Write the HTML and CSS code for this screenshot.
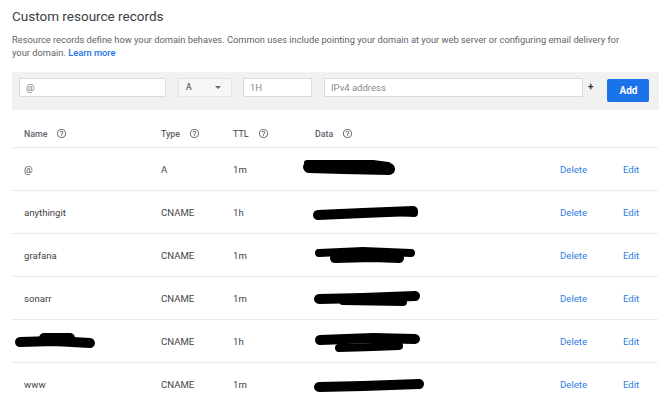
FILE: index.html
```html
<!DOCTYPE html>
<html>
<head>
<meta charset="utf-8">
<link rel="stylesheet" href="styles.css">
</head>
<body>
<div class="page">
  <h1 class="title">Custom resource records</h1>
  <p class="desc"><span class="line">Resource records define how your domain behaves. Common uses include pointing your domain at your web server or configuring email delivery for</span><span class="line">your domain. <a class="learn" href="#">Learn more</a></span></p>

  <div class="bar">
    <div class="field f-name">@</div>
    <div class="select">A<span class="caret"></span></div>
    <div class="field f-ttl">1H</div>
    <div class="field f-data">IPv4 address</div>
    <span class="plus">+</span>
    <button class="add">Add</button>
  </div>

  <div class="table">
    <div class="row head">
      <div class="cell">Name<svg class="help" viewBox="0 0 24 24"><path d="M11 18h2v-2h-2v2zm1-16C6.48 2 2 6.48 2 12s4.48 10 10 10 10-4.48 10-10S17.52 2 12 2zm0 18c-4.41 0-8-3.59-8-8s3.59-8 8-8 8 3.59 8 8-3.59 8-8 8zm0-14c-2.21 0-4 1.79-4 4h2c0-1.1.9-2 2-2s2 .9 2 2c0 2-3 1.75-3 5h2c0-2.25 3-2.5 3-5 0-2.21-1.79-4-4-4z"/></svg></div>
      <div class="cell">Type<svg class="help" viewBox="0 0 24 24"><path d="M11 18h2v-2h-2v2zm1-16C6.48 2 2 6.48 2 12s4.48 10 10 10 10-4.48 10-10S17.52 2 12 2zm0 18c-4.41 0-8-3.59-8-8s3.59-8 8-8 8 3.59 8 8-3.59 8-8 8zm0-14c-2.21 0-4 1.79-4 4h2c0-1.1.9-2 2-2s2 .9 2 2c0 2-3 1.75-3 5h2c0-2.25 3-2.5 3-5 0-2.21-1.79-4-4-4z"/></svg></div>
      <div class="cell">TTL<svg class="help" viewBox="0 0 24 24"><path d="M11 18h2v-2h-2v2zm1-16C6.48 2 2 6.48 2 12s4.48 10 10 10 10-4.48 10-10S17.52 2 12 2zm0 18c-4.41 0-8-3.59-8-8s3.59-8 8-8 8 3.59 8 8-3.59 8-8 8zm0-14c-2.21 0-4 1.79-4 4h2c0-1.1.9-2 2-2s2 .9 2 2c0 2-3 1.75-3 5h2c0-2.25 3-2.5 3-5 0-2.21-1.79-4-4-4z"/></svg></div>
      <div class="cell">Data<svg class="help" viewBox="0 0 24 24"><path d="M11 18h2v-2h-2v2zm1-16C6.48 2 2 6.48 2 12s4.48 10 10 10 10-4.48 10-10S17.52 2 12 2zm0 18c-4.41 0-8-3.59-8-8s3.59-8 8-8 8 3.59 8 8-3.59 8-8 8zm0-14c-2.21 0-4 1.79-4 4h2c0-1.1.9-2 2-2s2 .9 2 2c0 2-3 1.75-3 5h2c0-2.25 3-2.5 3-5 0-2.21-1.79-4-4-4z"/></svg></div>
      <div class="cell"></div>
      <div class="cell"></div>
    </div>

    <div class="row">
      <div class="cell">@</div>
      <div class="cell">A</div>
      <div class="cell">1m</div>
      <div class="cell data"><svg class="blob" viewBox="0 0 130 43"><path d="M6 19 L40 20 L86 21" /><path class="thin" d="M4 15 L70 15 L85 17"/></svg></div>
      <div class="cell act">Delete</div>
      <div class="cell act">Edit</div>
    </div>

    <div class="row">
      <div class="cell">anythingit</div>
      <div class="cell">CNAME</div>
      <div class="cell">1h</div>
      <div class="cell data"><svg class="blob" viewBox="0 0 130 43"><path class="m" d="M15 24 L60 22 L110 20" /><path class="s" d="M95 21 L111 22"/></svg></div>
      <div class="cell act">Delete</div>
      <div class="cell act">Edit</div>
    </div>

    <div class="row">
      <div class="cell">grafana</div>
      <div class="cell">CNAME</div>
      <div class="cell">1m</div>
      <div class="cell data"><svg class="blob" viewBox="0 0 130 43"><path class="s" d="M16 19 L60 17 L108 19" /><path class="m" d="M32 24 L70 23 L96 24"/></svg></div>
      <div class="cell act">Delete</div>
      <div class="cell act">Edit</div>
    </div>

    <div class="row">
      <div class="cell">sonarr</div>
      <div class="cell">CNAME</div>
      <div class="cell">1m</div>
      <div class="cell data"><svg class="blob" viewBox="0 0 130 43"><path class="m" d="M16 22 L60 21 L112 19" /><path class="s" d="M40 24 L100 25"/></svg></div>
      <div class="cell act">Delete</div>
      <div class="cell act">Edit</div>
    </div>

    <div class="row">
      <div class="cell"><svg class="nblob" viewBox="0 0 90 43"><path class="m" d="M6 22 L40 21 L76 23" /><path class="m" d="M30 18 L56 18"/></svg></div>
      <div class="cell">CNAME</div>
      <div class="cell">1h</div>
      <div class="cell data"><svg class="blob" viewBox="0 0 130 43"><path class="m" d="M17 20 L70 18 L112 19" /><path class="s" d="M36 28 L70 27 L96 26"/></svg></div>
      <div class="cell act">Delete</div>
      <div class="cell act">Edit</div>
    </div>

    <div class="row">
      <div class="cell">www</div>
      <div class="cell">CNAME</div>
      <div class="cell">1m</div>
      <div class="cell data"><svg class="blob" viewBox="0 0 130 43"><path class="m" d="M16 24 L60 23 L116 21" /></svg></div>
      <div class="cell act">Delete</div>
      <div class="cell act">Edit</div>
    </div>
  </div>
</div>
</body>
</html>
```

FILE: styles.css
```css
* { box-sizing: border-box; }
html, body { margin: 0; padding: 0; background: #fff; }
body { font-family: Roboto, "Liberation Sans", Arial, sans-serif; color: #3c4043; }

.page { padding: 0 8px 0 12px; width: 667px; }

.title {
  margin: 0;
  padding-top: 7px;
  font-size: 13.5px;
  line-height: 18px;
  font-weight: 400;
  color: #3c4043;
}

.desc {
  margin: 8px 0 0;
  font-size: 9.3px;
  line-height: 13px;
  color: #5f6368;
  width: 645px;
}
.line { display: block; white-space: nowrap; }
.learn { color: #1a73e8; text-decoration: none; font-weight: 500; }

.bar {
  margin-top: 13px;
  height: 38px;
  width: 647px;
  background: #f1f1f1;
  display: flex;
  align-items: flex-start;
  padding: 6px 0 0 7px;
}
.field {
  height: 19px;
  background: #fff;
  border: 1px solid #dcdcdc;
  font-size: 9.5px;
  line-height: 17px;
  padding-left: 6px;
  color: #8a8a8a;
}
.f-name { width: 147px; color: #777; }
.select {
  margin-left: 12px;
  width: 54px;
  height: 19px;
  background: #f7f7f7;
  border: 1px solid #e4e4e4;
  font-size: 8.5px;
  line-height: 17px;
  padding-left: 7px;
  color: #333;
  display: flex;
  align-items: center;
}
.caret {
  margin-left: 23px;
  width: 0; height: 0;
  border-left: 3px solid transparent;
  border-right: 3px solid transparent;
  border-top: 3px solid #666;
}
.f-ttl { margin-left: 11px; width: 69px; }
.f-data { margin-left: 12px; width: 259px; }
.plus {
  margin-left: 5px;
  font-size: 10px;
  line-height: 17px;
  font-weight: 700;
  color: #333;
}
.add {
  margin-left: 14px;
  margin-top: 1px;
  width: 42px;
  height: 23px;
  border: none;
  border-radius: 2px;
  background: #1a73e8;
  color: #fff;
  font-family: Roboto, "Liberation Sans", Arial, sans-serif;
  font-weight: 700;
  font-size: 10px;
  padding: 0;
}

.table { width: 646px; }
.row {
  display: grid;
  grid-template-columns: 137px 72px 82px 245px 63px 1fr;
  height: 43px;
  padding-left: 12px;
  border-bottom: 1px solid #ebebeb;
  align-items: center;
  font-size: 9.6px;
  color: #444;
}
.row.head {
  height: 38px;
  font-size: 8.8px;
  font-weight: 500;
  color: #5f6368;
  padding-top: 10px;
}
.cell { display: flex; align-items: center; white-space: nowrap; }
.help { width: 11px; height: 11px; margin-left: 9px; fill: #6f6f6f; }
.act { color: #2f7de1; font-weight: 400; }
.data { align-self: stretch; }
.blob { width: 130px; height: 43px; margin-left: -12px; display: block; }
.nblob { width: 90px; height: 43px; margin-left: -10px; display: block; }
.blob path, .nblob path {
  fill: none;
  stroke: #000;
  stroke-width: 12;
  stroke-linecap: round;
  stroke-linejoin: round;
}
.blob path.thin { stroke-width: 6; }
.blob path.m, .nblob path.m { stroke-width: 10; }
.blob path.s { stroke-width: 8; }
```
